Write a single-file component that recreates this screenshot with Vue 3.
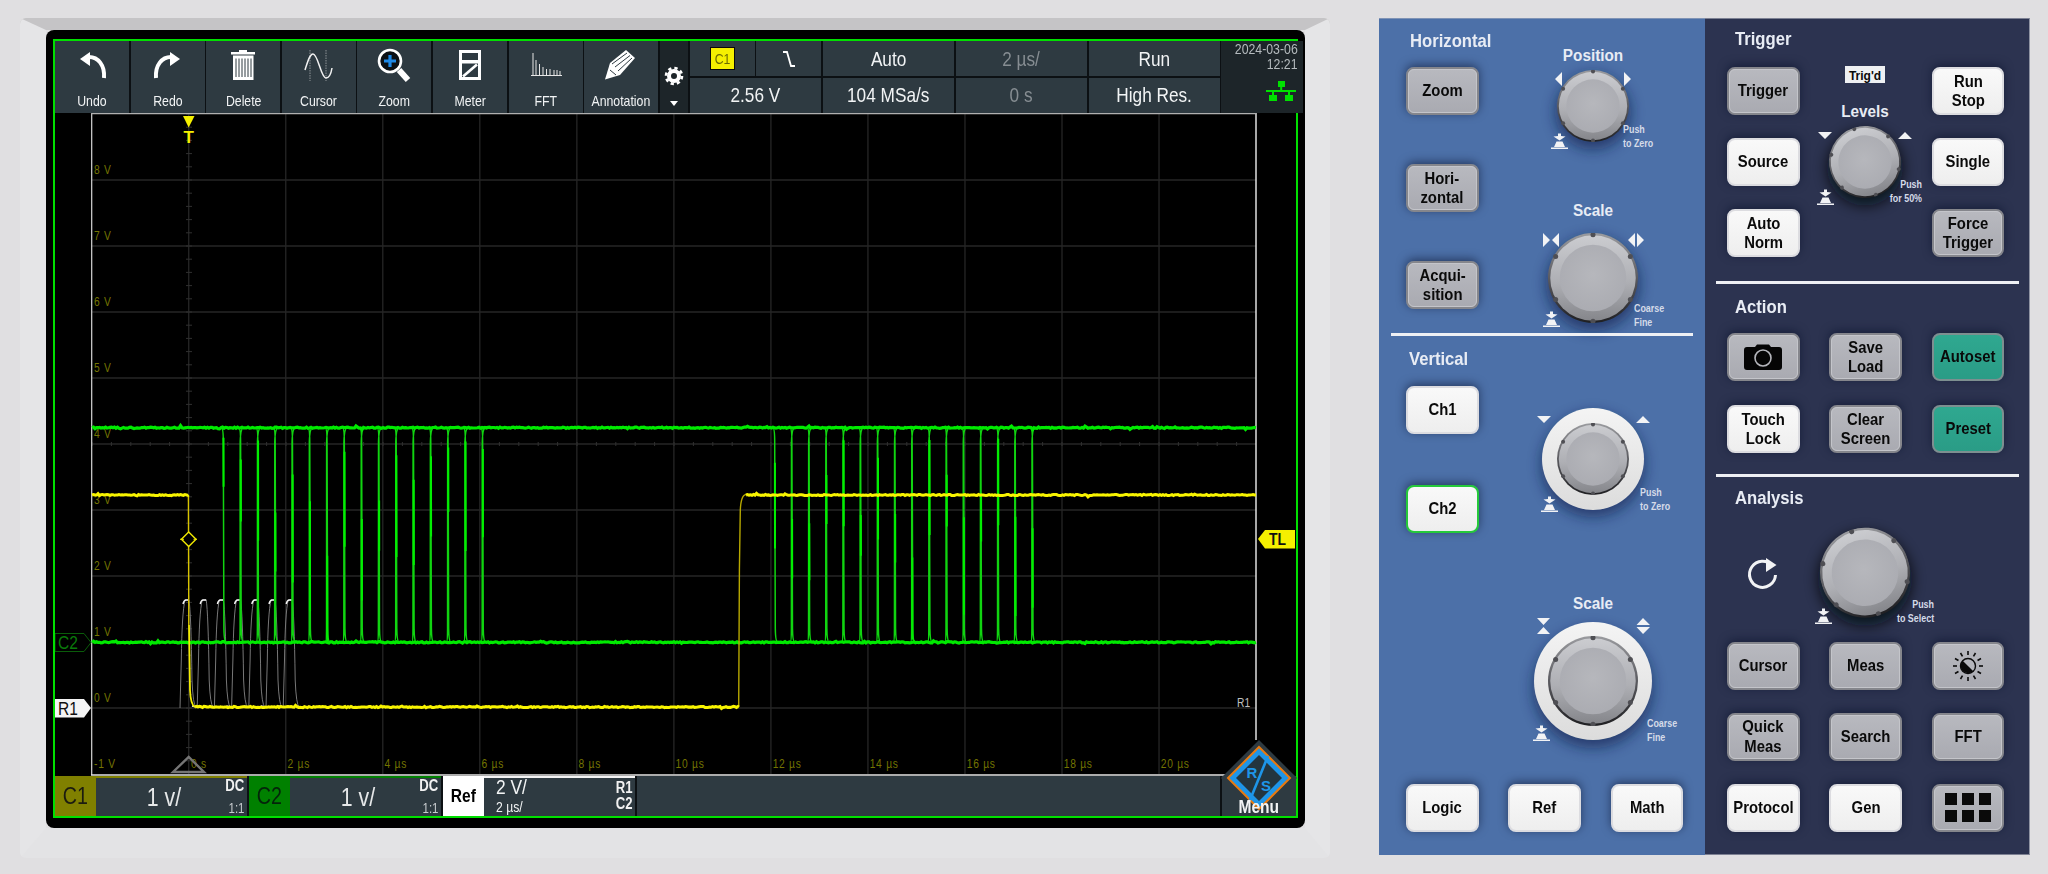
<script setup>
function rng(seed) {
  let s = seed
  return () => {
    s = (s * 16807) % 2147483647
    return s / 2147483647
  }
}
function noisy(x0, x1, y, seed, amp = 1) {
  const r = rng(seed)
  let d = `M${x0},${y}`
  for (let x = x0 + 1.5; x < x1; x += 1.5) {
    let v = y + (r() - 0.5) * amp
    if (r() < 0.05) v += (r() - 0.5) * 3
    d += `L${x.toFixed(1)},${v.toFixed(1)}`
  }
  return d + `L${x1},${y}`
}
const HI = 427.7
const LO = 642.3
const seq = (start, step, n) => Array.from({ length: n }, (_, i) => start + step * i)
const edgeXs = [...seq(223.3, 17.29, 16), ...seq(774.7, 17.18, 16)]
const edges = edgeXs
  .map((x, i) => {
    const fall = `M${x - 2},${HI} Q${x},${HI} ${x},${HI + 14} L${x + 0.6},${LO - 14} Q${x + 0.8},${LO} ${x + 3},${LO}`
    const rise = i === 0 || i === 16 ? '' : `M${x - 1.5},${LO} Q${x - 0.6},${LO} ${x - 0.5},${LO - 14} L${x - 0.4},${HI + 14} Q${x},${HI} ${x + 3},${HI}`
    return fall + rise
  })
  .join(' ')
const r2 = rng(77)
const edgeBright = edgeXs
  .map((x) => {
    const a = HI + 10 + r2() * 120
    const b = a + 40 + r2() * 70
    return `M${x + 0.2},${a.toFixed(1)}L${x + 0.3},${b.toFixed(1)}`
  })
  .join(' ')
const c2Hi = noisy(92, 1256, HI, 11, 1.2)
const c2Lo = noisy(92, 1256, LO, 23, 1.2)
const c1A = noisy(92, 188.5, 495, 31, 1.1)
const c1B = noisy(195, 739, 707, 47, 1.2)
const c1C = noisy(746, 1256, 495, 59, 1.1)
const refXs = seq(180, 17.2, 7)
const refSides = refXs
  .map((x) => `M${x},708 L${x + 1.3},660 Q${x + 2},612 ${x + 5},600 L${x + 9},600 Q${x + 11},612 ${x + 12},680 Q${x + 13},705 ${x + 16},707`)
  .join(' ')
const refTops = refXs.map((x) => `M${x + 3},604 Q${x + 4},600 ${x + 6},600 L${x + 9},600`).join(' ')
const refLows = refXs.map((x) => `M${x + 12},706 L${x + 17},707`).join(' ')
const gridX = seq(91.7, 97.03, 13).slice(1, 12)
const gridY = [180, 246, 312, 378, 444, 510, 576, 642, 708]
const vLabels = gridY.map((y, i) => ({ y: y - 10, t: `${8 - i} V` }))
const tLabels = seq(2, 2, 10).map((t, i) => ({ x: 287.5 + i * 97.03, t: `${t} µs` }))
const vTicks = seq(114, 13.2, 50)
const hTicks = seq(92, 19.4, 60)
const rays = seq(0, 30, 12)
</script>

<template>
  <div class="page">
    <svg class="defs" width="0" height="0" aria-hidden="true">
      <defs>
        <linearGradient id="rim" x1="0" y1="0" x2="0" y2="1">
          <stop offset="0" stop-color="#9a9b9f" />
          <stop offset="0.55" stop-color="#55555a" />
          <stop offset="1" stop-color="#1f1f22" />
        </linearGradient>
        <linearGradient id="body" x1="0" y1="0" x2="0" y2="1">
          <stop offset="0" stop-color="#cbccd0" />
          <stop offset="0.55" stop-color="#aeafb4" />
          <stop offset="1" stop-color="#85868b" />
        </linearGradient>
        <radialGradient id="cap" cx="0.5" cy="0.45" r="0.6">
          <stop offset="0" stop-color="#b6b7bc" />
          <stop offset="1" stop-color="#aaabb1" />
        </radialGradient>
        <linearGradient id="ring" x1="0" y1="0" x2="0" y2="1">
          <stop offset="0" stop-color="#f4f4f4" />
          <stop offset="1" stop-color="#dcdcdc" />
        </linearGradient>
        <filter id="blur" x="-50%" y="-50%" width="200%" height="200%">
          <feGaussianBlur stdDeviation="7" />
        </filter>
        <symbol id="knob" viewBox="-50 -50 100 100">
          <circle r="50" fill="url(#rim)" />
          <circle r="47.5" fill="url(#body)" />
          <circle r="37" fill="url(#cap)" />
          <g fill="#4f4f54">
            <circle cx="0" cy="-48" r="2.8" />
            <circle cx="41.5" cy="-24" r="2.8" />
            <circle cx="41.5" cy="24" r="2.8" />
            <circle cx="0" cy="48" r="2.8" />
            <circle cx="-41.5" cy="24" r="2.8" />
            <circle cx="-41.5" cy="-24" r="2.8" />
          </g>
        </symbol>
        <symbol id="push" viewBox="0 0 17 16">
          <path d="M2.5 3.5 L7 3 L7 0.5 L10 0.5 L10 3 L14.5 3.5 L8.5 7.5Z M5.5 8.5 H11.5 L14 14 H3Z M0 14.6 H17 V16 H0Z" fill="#f2f3f5" />
        </symbol>
      </defs>
    </svg>

    <div class="bezel">
      <div class="frame">
        <div class="display">
          <div class="toolbar">
            <div class="tools">
              <div class="tool">
                <svg class="icon" viewBox="0 0 36 36"><path d="M6 13 L16 6 V20Z" fill="#fff" /><path d="M15 11 C24 11 31 19 30 32" fill="none" stroke="#fff" stroke-width="4" /></svg>
                <span class="nr">Undo</span>
              </div>
              <div class="tool">
                <svg class="icon" viewBox="0 0 36 36"><path d="M30 13 L20 6 V20Z" fill="#fff" /><path d="M21 11 C12 11 5 19 6 32" fill="none" stroke="#fff" stroke-width="4" /></svg>
                <span class="nr">Redo</span>
              </div>
              <div class="tool">
                <svg class="icon" viewBox="0 0 36 36">
                  <path d="M6 6 H14 V4 H22 V6 H30 V8.5 H6Z M8 9.5 H28.5 V34 H8Z" fill="#fff" />
                  <path d="M11 12.5 V31 M14 12.5 V31 M17 12.5 V31 M20 12.5 V31 M23 12.5 V31 M26 12.5 V31" stroke="#2e3a41" stroke-width="1" />
                </svg>
                <span class="nr">Delete</span>
              </div>
              <div class="tool">
                <svg class="icon" viewBox="0 0 36 36">
                  <path d="M9 4 V35 M25 4 V35" stroke="#8c9296" stroke-width="1" stroke-dasharray="1.5 1" />
                  <path d="M4 24 C7 14 9 8 12 8 C17 8 20 32 25 32 C28 32 30 28 31 22" fill="none" stroke="#f2f2f2" stroke-width="1.5" />
                </svg>
                <span class="nr">Cursor</span>
              </div>
              <div class="tool">
                <svg class="icon" viewBox="0 0 36 36">
                  <circle cx="14" cy="15" r="11" fill="#0b1014" stroke="#fff" stroke-width="2.6" />
                  <path d="M14 9 V21 M8 15 H20" stroke="#1e88e5" stroke-width="3.2" />
                  <path d="M23 24 L32 34" stroke="#fff" stroke-width="6" />
                </svg>
                <span class="nr">Zoom</span>
              </div>
              <div class="tool">
                <svg class="icon" viewBox="0 0 36 36">
                  <rect x="7" y="4" width="22" height="30" fill="#fff" />
                  <rect x="10" y="7" width="16" height="7" fill="#2e3a41" />
                  <rect x="10" y="17.5" width="16" height="13.5" fill="#2e3a41" />
                  <path d="M11 30.5 L25 18.5" stroke="#fff" stroke-width="2.6" />
                </svg>
                <span class="nr">Meter</span>
              </div>
              <div class="tool">
                <svg class="icon" viewBox="0 0 36 36">
                  <path d="M3 29.5 H34" stroke="#e6e6e6" stroke-width="1" />
                  <path d="M5 29 V7 M8 29 V14 M11.5 29 V18 M15 29 V21 M18.5 29 V23 M22 29 V23 M26 29 V24 M29 29 V24 M32 29 V25" stroke="#e6e6e6" stroke-width="1" />
                </svg>
                <span class="nr">FFT</span>
              </div>
              <div class="tool">
                <svg class="icon" viewBox="0 0 36 36">
                  <path d="M2 33.5 L7 17 L23 4 L32 12 L17 29Z" fill="#fff" />
                  <path d="M7 24 L13 29 M9 18 L24 7 M12 21 L27 9.5 M15 25 L29 12" stroke="#2e3a41" stroke-width="1" />
                </svg>
                <span class="nr">Annotation</span>
              </div>
            </div>
            <div class="gear-col">
              <svg class="gear" viewBox="0 0 20 20">
                <circle cx="10" cy="10" r="5" fill="none" stroke="#fff" stroke-width="4" />
                <circle cx="10" cy="10" r="8" fill="none" stroke="#fff" stroke-width="2.6" stroke-dasharray="3.3 3" />
              </svg>
              <svg class="caret" viewBox="0 0 8 5"><path d="M0 0 H8 L4 5Z" fill="#fff" /></svg>
            </div>
            <div class="status">
              <div class="st chip-cell"><span class="chip"><span class="nr">C1</span></span></div>
              <div class="st">
                <svg class="slope" viewBox="0 0 14 16"><path d="M1 1 H5 L9 15 H13" fill="none" stroke="#fff" stroke-width="1.8" /></svg>
              </div>
              <div class="st"><span class="nr">Auto</span></div>
              <div class="st dim"><span class="nr">2 µs/</span></div>
              <div class="st"><span class="nr">Run</span></div>
              <div class="st span2"><span class="nr">2.56 V</span></div>
              <div class="st"><span class="nr">104 MSa/s</span></div>
              <div class="st dim"><span class="nr">0 s</span></div>
              <div class="st"><span class="nr">High Res.</span></div>
            </div>
            <div class="clock">
              <span class="nr">2024-03-06</span>
              <span class="nr">12:21</span>
              <svg class="net" viewBox="0 0 30 20">
                <path d="M12 0 H19 V6 H16.2 V9 H30 V11 H24 V14 H27 V20 H19 V14 H22 V11 H8 V14 H11 V20 H3 V14 H6 V11 H0 V9 H14.2 V6 H12Z" fill="#00e000" />
              </svg>
            </div>
          </div>

          <svg class="plot" viewBox="55 113 1241 663" width="1241" height="663">
            <rect x="55" y="113" width="1241" height="663" fill="#000" />
            <g stroke="#262626" stroke-width="1.3">
              <path v-for="x in gridX" :key="x" :d="`M${x},114 V774`" />
              <path v-for="y in gridY" :key="y" :d="`M92,${y} H1256`" />
            </g>
            <g stroke="#303030" stroke-width="1">
              <path v-for="y in vTicks" :key="y" :d="`M186,${y} H192`" />
              <path v-for="x in hTicks" :key="x" :d="`M${x},442 V446`" />
            </g>
            <path d="M91.7,113 V775" stroke="#d8d8d8" stroke-width="1.2" />
            <path d="M1256,113 V740" stroke="#f0f0f0" stroke-width="1.4" />
            <path d="M91,113.5 H1256" stroke="#b0b0b0" stroke-width="1.4" />
            <path d="M91,775 H1225" stroke="#e6e6e6" stroke-width="1.4" />

            <g class="axis">
              <text v-for="l in vLabels" :key="l.t" x="94" :y="l.y + 4">{{ l.t }}</text>
              <text x="94" y="768">-1 V</text>
              <text x="191" y="768">0 s</text>
              <text v-for="l in tLabels" :key="l.t" :x="l.x" y="768">{{ l.t }}</text>
            </g>
            <path d="M173,772 L188.7,757 L204,772Z" fill="none" stroke="#757575" stroke-width="2.4" />
            <text class="r1small" x="1237" y="707">R1</text>

            <path :d="refSides" fill="none" stroke="#787878" stroke-width="1" />
            <path :d="refTops" fill="none" stroke="#f4f4f4" stroke-width="1.5" />
            <path :d="refLows" fill="none" stroke="#f0f0f0" stroke-width="1.5" />

            <path :d="edges" fill="none" stroke="#10d410" stroke-width="1.5" />
            <path :d="edgeBright" fill="none" stroke="#00f000" stroke-width="2" />
            <path :d="c2Hi" fill="none" stroke="#00ea00" stroke-width="3.2" />
            <path :d="c2Lo" fill="none" stroke="#00ea00" stroke-width="3.2" />

            <path d="M188.4,495 L188.8,625" fill="none" stroke="#d8c400" stroke-width="1.4" />
            <path d="M189,625 L190,690 Q190.6,705 195,707" fill="none" stroke="#f5ee00" stroke-width="1.8" />
            <path d="M738.7,707 L739.4,570 L740.3,510 Q741,495 746,494.5" fill="none" stroke="#b7a800" stroke-width="1.4" />
            <path :d="c1A" fill="none" stroke="#f8f400" stroke-width="3" />
            <path :d="c1B" fill="none" stroke="#f8f400" stroke-width="3" />
            <path :d="c1C" fill="none" stroke="#f8f400" stroke-width="3" />

            <path d="M188.7,532 L196,539.3 L188.7,546.6 L181.4,539.3Z" fill="#000" stroke="#f0e800" stroke-width="1.4" />
            <path d="M180,539.3 H184 M193.5,539.3 H197" stroke="#f0e800" stroke-width="1" />

            <path d="M183,116 H194.5 L188.7,127.5Z" fill="#f5f000" />
            <text class="tmark" x="188.7" y="142.5">T</text>

            <path d="M55,633.5 H84 L91,642.5 L84,651.5 H55Z" fill="#000" stroke="#0a5c0a" stroke-width="1" />
            <text class="mark green" x="58" y="649">C2</text>
            <path d="M55,699 H84 L91,708 L84,717.5 H55Z" fill="#f4f4f4" />
            <text class="mark" x="58" y="715">R1</text>
            <path d="M1258,539 L1265,530 H1295 V548.5 H1265Z" fill="#f5f000" />
            <text class="mark tl" x="1269" y="545.5">TL</text>
          </svg>

          <div class="bottom">
            <div class="chan olive">
              <div class="tag"><span class="nr">C1</span></div>
              <div class="val"><span class="nr">1 v/</span></div>
              <div class="meta"><b class="nr rt">DC</b><span class="nr rt">1:1</span></div>
            </div>
            <div class="chan green">
              <div class="tag"><span class="nr">C2</span></div>
              <div class="val"><span class="nr">1 v/</span></div>
              <div class="meta"><b class="nr rt">DC</b><span class="nr rt">1:1</span></div>
            </div>
            <div class="chan ref">
              <div class="tag"><span class="nr">Ref</span></div>
              <div class="refval"><span class="rv">2 V/</span><small class="rv">2 µs/</small></div>
              <div class="meta refmeta"><b class="nr rt">R1</b><b class="nr rt">C2</b></div>
            </div>
            <div class="spacer"></div>
            <div class="menu">
              <svg class="logo" viewBox="-38 -38 76 76">
                <path d="M0 -38 L38 0 L0 38 L-38 0Z" fill="#2e3a41" />
                <path d="M0 -31 L31 0 L0 31 L-31 0Z" fill="#1e95e8" stroke="#e87a10" stroke-width="2" />
                <path d="M0 -23 L23 0 L0 23 L-23 0Z" fill="#23353f" />
                <path d="M9 -22 L-9 22" stroke="#1e95e8" stroke-width="2.6" />
                <text class="rs" x="-7" y="0">R</text>
                <text class="rs" x="7" y="13">S</text>
              </svg>
              <span class="nr">Menu</span>
            </div>
          </div>
        </div>
      </div>
    </div>

    <div class="panels">
      <div class="blue">
        <section class="hz">
          <div class="col">
            <h3>Horizontal</h3>
            <button class="btn gray"><span class="tx">Zoom</span></button>
            <button class="btn gray"><span class="tx">Hori-<br />zontal</span></button>
            <button class="btn gray"><span class="tx">Acqui-<br />sition</span></button>
          </div>
          <svg class="ctl" viewBox="1478 18 227 315" width="227" height="315">
            <text class="lab" x="1592" y="60">Position</text>
            <circle class="sh" cx="1592" cy="111" r="38" filter="url(#blur)" />
            <use href="#knob" x="1556" y="69" width="72" height="72" />
            <path d="M1561 71 V85 L1554 78Z M1623 71 V85 L1630 78Z" fill="#f2f3f5" />
            <use href="#push" x="1550" y="132" width="17" height="16" />
            <text class="hint" x="1622" y="132.5">Push</text>
            <text class="hint" x="1622" y="146.5">to Zero</text>

            <text class="lab" x="1592" y="215.5">Scale</text>
            <circle class="sh" cx="1592" cy="283" r="47" filter="url(#blur)" />
            <use href="#knob" x="1547" y="232" width="90" height="90" />
            <path d="M1542 232 L1549 239 L1542 246Z M1558 232 L1551 239 L1558 246Z M1634 232 L1627 239 L1634 246Z M1636 232 L1643 239 L1636 246Z" fill="#f2f3f5" />
            <use href="#push" x="1542" y="310" width="17" height="16" />
            <text class="hint" x="1633" y="311.5">Coarse</text>
            <text class="hint" x="1633" y="325.5">Fine</text>
          </svg>
        </section>
        <hr class="rule blue-rule" />
        <section class="vt">
          <div class="col">
            <h3>Vertical</h3>
            <button class="btn"><span class="tx">Ch1</span></button>
            <button class="btn ch2"><span class="tx">Ch2</span></button>
          </div>
          <svg class="ctl" viewBox="1478 336 227 434" width="227" height="434">
            <circle class="sh" cx="1592" cy="465" r="52" filter="url(#blur)" />
            <circle cx="1592" cy="459" r="51" fill="url(#ring)" />
            <use href="#knob" x="1556" y="423" width="72" height="72" />
            <path d="M1536 416 H1550 L1543 423Z M1635 423 H1649 L1642 416Z" fill="#f2f3f5" />
            <use href="#push" x="1540" y="496" width="17" height="16" />
            <text class="hint" x="1639" y="496.5">Push</text>
            <text class="hint" x="1639" y="510.5">to Zero</text>

            <text class="lab" x="1592" y="609.5">Scale</text>
            <circle class="sh" cx="1592" cy="688" r="60" filter="url(#blur)" />
            <circle cx="1592" cy="681" r="59" fill="url(#ring)" />
            <use href="#knob" x="1547" y="636" width="90" height="90" />
            <path d="M1536 618 H1549 L1542.5 625Z M1536 634 H1549 L1542.5 627Z M1635.5 625 H1649 L1642 618Z M1635.5 627 H1649 L1642 634Z" fill="#f2f3f5" />
            <use href="#push" x="1532" y="725" width="17" height="16" />
            <text class="hint" x="1646" y="727">Coarse</text>
            <text class="hint" x="1646" y="741">Fine</text>
          </svg>
        </section>
        <div class="mathrow">
          <button class="btn"><span class="tx">Logic</span></button>
          <button class="btn"><span class="tx">Ref</span></button>
          <button class="btn"><span class="tx">Math</span></button>
        </div>
      </div>

      <div class="navy">
        <h3 class="first">Trigger</h3>
        <div class="keys trigger">
          <button class="btn gray"><span class="tx">Trigger</span></button>
          <svg class="ctl mid" viewBox="1829 67 72 190" width="72" height="190">
            <rect x="1845" y="66" width="40" height="17" fill="#eef0f2" />
            <text class="trigd" x="1865" y="79.5">Trig'd</text>
            <text class="lab" x="1865" y="117">Levels</text>
            <circle class="sh dark" cx="1865" cy="168" r="38" filter="url(#blur)" />
            <use href="#knob" x="1829" y="126" width="72" height="72" transform="rotate(-18 1865 162)" />
            <path d="M1818 132 H1832 L1825 139Z M1898 139 H1912 L1905 132Z" fill="#f2f3f5" />
            <use href="#push" x="1817" y="189" width="17" height="16" />
            <text class="hint end" x="1922" y="188.5">Push</text>
            <text class="hint end" x="1922" y="202.5">for 50%</text>
          </svg>
          <button class="btn"><span class="tx">Run<br />Stop</span></button>
          <button class="btn"><span class="tx">Source</span></button>
          <button class="btn"><span class="tx">Single</span></button>
          <button class="btn"><span class="tx">Auto<br />Norm</span></button>
          <button class="btn gray force"><span class="tx">Force<br />Trigger</span></button>
        </div>
        <hr class="rule r1" />
        <h3 class="after">Action</h3>
        <div class="keys action">
          <button class="btn gray">
            <svg class="cam" viewBox="0 0 38 26">
              <path d="M3 3 H11 L13 0.5 H25 L27 3 H35 Q38 3 38 6 V23 Q38 26 35 26 H3 Q0 26 0 23 V6 Q0 3 3 3Z" fill="#050505" />
              <circle cx="19" cy="14" r="8" fill="none" stroke="#b5b6bc" stroke-width="1.6" />
            </svg>
          </button>
          <button class="btn gray"><span class="tx">Save<br />Load</span></button>
          <button class="btn teal"><span class="tx">Autoset</span></button>
          <button class="btn"><span class="tx">Touch<br />Lock</span></button>
          <button class="btn gray"><span class="tx">Clear<br />Screen</span></button>
          <button class="btn teal"><span class="tx">Preset</span></button>
        </div>
        <hr class="rule r2" />
        <h3 class="after an">Analysis</h3>
        <svg class="ctl analysis" viewBox="1705 508 325 129" width="325" height="129">
          <path d="M1772.5 566 A13 13 0 1 0 1775.5 575" fill="none" stroke="#f2f3f5" stroke-width="3" />
          <path d="M1766 558 L1776.5 565 L1766 572Z" fill="#f2f3f5" />
          <circle class="sh dark" cx="1865" cy="579" r="47" filter="url(#blur)" />
          <use href="#knob" x="1820" y="527.7" width="90" height="90" transform="rotate(-18 1865 572.7)" />
          <use href="#push" x="1815" y="608" width="17" height="16" />
          <text class="hint end" x="1934" y="608.5">Push</text>
          <text class="hint end" x="1934" y="622.5">to Select</text>
        </svg>
        <div class="keys analysis-keys">
          <button class="btn gray"><span class="tx">Cursor</span></button>
          <button class="btn gray"><span class="tx">Meas</span></button>
          <button class="btn gray">
            <svg class="sun" viewBox="-16 -16 32 32">
              <path v-for="a in rays" :key="a" d="M0 -11 V-15" stroke="#0a0a0a" stroke-width="1.6" :transform="`rotate(${a})`" />
              <circle r="7.5" fill="#b5b6bc" stroke="#0a0a0a" stroke-width="1.4" />
              <path d="M5.3 -5.3 A7.5 7.5 0 0 1 -5.3 5.3 Z" fill="#0a0a0a" transform="rotate(90)" />
            </svg>
          </button>
          <button class="btn gray"><span class="tx">Quick<br />Meas</span></button>
          <button class="btn gray"><span class="tx">Search</span></button>
          <button class="btn gray"><span class="tx">FFT</span></button>
          <button class="btn"><span class="tx">Protocol</span></button>
          <button class="btn"><span class="tx">Gen</span></button>
          <button class="btn gray">
            <svg class="tiles" viewBox="0 0 46 30">
              <path d="M0 0h12v12H0z M17 0h12v12H17z M34 0h12v12H34z M0 17h12v12H0z M17 17h12v12H17z M34 17h12v12H34z" fill="#0a0a0a" />
            </svg>
          </button>
        </div>
      </div>
    </div>
  </div>
</template>

<style>
html, body { margin: 0; background: #e0dfe1; }
</style>

<style scoped>
.page {
  width: 2048px;
  height: 874px;
  box-sizing: border-box;
  padding: 18px 0 0 20px;
  display: flex;
  align-items: flex-start;
  background: #e0dfe1;
  overflow: hidden;
  font-family: "Liberation Sans", Arial, sans-serif;
}
.defs { position: absolute; }
.nr {
  display: inline-block;
  white-space: nowrap;
  transform: scaleX(0.82);
}
.nr.rt { transform-origin: 100% 50%; }
.tx {
  display: inline-block;
  white-space: nowrap;
  transform: scaleX(0.9);
}

/* ---- scope ---- */
.bezel {
  width: 1310px;
  height: 840px;
  flex: none;
  box-sizing: border-box;
  border-style: solid;
  border-width: 12px 25px 30px 26px;
  border-color: #c5c4c6 #e5e5e7 #e3e3e5 #e5e5e7;
  border-radius: 6px;
}
.frame {
  height: 798px;
  width: 1259px;
  box-sizing: border-box;
  padding: 9px 7px 10px 7px;
  background: #000;
  border-radius: 8px;
}
.display {
  height: 779px;
  box-sizing: border-box;
  border: 2px solid #00e000;
  background: #000;
  display: flex;
  flex-direction: column;
  color: #f2f4f5;
}
.toolbar {
  height: 72px;
  flex: none;
  display: flex;
  background: #0c1013;
}
.tools { display: flex; gap: 1.6px; width: 604px; flex: none; }
.tool {
  width: 74px;
  flex: none;
  background: #2e3a41;
  display: flex;
  flex-direction: column;
  align-items: center;
  font-size: 15px;
  line-height: 18px;
}
.icon { width: 36px; height: 36px; margin-top: 5px; margin-bottom: 10px; }
.gear-col {
  width: 28px;
  margin: 0 2px 0 1px;
  flex: none;
  background: #1d2529;
  display: flex;
  flex-direction: column;
  align-items: center;
}
.gear { width: 20px; height: 20px; margin-top: 25px; }
.caret { width: 8px; height: 5px; margin-top: 15px; }
.status {
  width: 530px;
  flex: none;
  display: grid;
  grid-template-columns: 64.5px 65px 131.5px 131.5px 131.5px;
  grid-template-rows: 35px 35.5px;
  gap: 1.5px;
}
.st {
  background: #2e3a41;
  display: flex;
  align-items: center;
  justify-content: center;
  font-size: 21px;
}
.st.dim { color: #868d92; }
.span2 { grid-column: span 2; }
.chip {
  width: 25px;
  height: 23px;
  background: #f5f000;
  color: #6a6a00;
  font-size: 15px;
  border: 1px solid #0a0a0a;
  box-sizing: border-box;
  display: flex;
  align-items: center;
  justify-content: center;
}
.slope { width: 14px; height: 16px; }
.clock {
  flex: 1;
  margin-left: 1px;
  background: #1d2529;
  display: flex;
  flex-direction: column;
  align-items: flex-end;
  padding: 1px 5px 0 0;
  font-size: 15px;
  line-height: 14.5px;
  color: #b4babd;
}
.clock .nr { transform-origin: 100% 50%; }
.net { width: 30px; height: 20px; margin-top: 10px; margin-right: 2px; }
.plot { display: block; flex: none; }

.axis text {
  font-size: 12.5px;
  fill: #747400;
  letter-spacing: 0.9px;
  transform: scaleX(0.82);
  transform-box: fill-box;
  transform-origin: 0 50%;
}
.r1small, .mark {
  transform: scaleX(0.82);
  transform-box: fill-box;
  transform-origin: 0 50%;
}
.r1small { font-size: 12.5px; fill: #c0c0c0; }
.tmark { font-size: 17px; font-weight: 700; fill: #f5f000; text-anchor: middle; }
.mark { font-size: 19px; fill: #111; }
.mark.green { fill: #0a7a0a; }
.mark.tl { font-weight: 700; font-size: 17px; }

.bottom { flex: 1; display: flex; gap: 2px; background: #0c1013; }
.chan {
  width: 192px;
  flex: none;
  display: flex;
  background: #2e3a41;
  box-sizing: border-box;
  border-top: 2px solid #808000;
}
.chan.green { border-top-color: #008000; }
.chan.ref { border-top-color: #f4f4f4; }
.tag {
  width: 41px;
  flex: none;
  margin-top: -2px;
  background: #808000;
  color: #1c1c10;
  font-size: 24px;
  display: flex;
  align-items: center;
  justify-content: center;
}
.green .tag { background: #008000; color: #04240a; }
.ref .tag { background: #fff; color: #000; font-size: 19px; font-weight: 700; }
.val { flex: 1; display: flex; align-items: center; justify-content: center; font-size: 26px; padding-left: 6px; color: #e6e8e9; }
.meta {
  width: 18px;
  padding-right: 3px;
  display: flex;
  flex-direction: column;
  justify-content: space-between;
  align-items: flex-end;
  font-size: 14px;
  line-height: 15px;
  color: #c8cccf;
}
.meta b { font-size: 16px; color: #f2f2f2; font-weight: 700; }
.refmeta { justify-content: flex-start; gap: 1px; padding-top: 2px; }
.refval {
  flex: 1;
  display: flex;
  flex-direction: column;
  align-items: flex-start;
  gap: 2px;
  margin-top: -1px;
  padding-left: 12px;
  font-size: 20px;
  line-height: 21px;
}
.rv {
  display: inline-block;
  white-space: nowrap;
  transform: scaleX(0.87);
  transform-origin: 0 50%;
}
.refval small { font-size: 14px; line-height: 15px; }
.spacer { flex: 1; background: #2e3a41; }
.menu {
  width: 74px;
  flex: none;
  position: relative;
  background: #2e3a41;
  display: flex;
  align-items: flex-end;
  justify-content: center;
  font-size: 19px;
  line-height: 19px;
  font-weight: 700;
}
.logo { position: absolute; left: 0; top: -36px; width: 76px; height: 76px; margin-left: -1px; }
.rs { font-size: 15px; font-weight: 700; fill: #1e95e8; text-anchor: middle; }

/* ---- panels ---- */
.panels { display: flex; margin-left: 49px; height: 837px; flex: none; }
.blue {
  width: 326px;
  flex: none;
  background: #4c70a8;
  box-sizing: border-box;
  border-top: 1px solid #7f93b5;
  display: flex;
  flex-direction: column;
}
.navy {
  width: 325px;
  flex: none;
  background: #2c3350;
  box-sizing: border-box;
  border-top: 1px solid #7d8193;
  border-bottom: 1px solid #7d8193;
  border-right: 1px solid #8e93a2;
  padding: 10px 0 0 21.7px;
  position: relative;
}
h3 {
  margin: 0;
  height: 20px;
  line-height: 20px;
  font-size: 18.5px;
  font-weight: 700;
  color: #e8ecf4;
  transform: scaleX(0.9);
  transform-origin: 0 50%;
  white-space: nowrap;
}
h3.first { margin-left: 8px; }
.hz, .vt { display: flex; align-items: flex-start; padding-left: 27px; }
.hz { height: 314px; }
.vt { height: 434px; }
.col { width: 72.6px; flex: none; display: flex; flex-direction: column; gap: 49px; padding-top: 12px; }
.col h3 { margin-left: 4px; margin-bottom: -33px; }
.vt .col { padding-top: 12.5px; gap: 51px; }
.vt .col h3 { margin-left: 3px; margin-bottom: -34px; }
.ctl { display: block; flex: none; overflow: visible; }
.lab {
  font-size: 17px;
  font-weight: 700;
  fill: #e8ecf4;
  text-anchor: middle;
  transform: scaleX(0.9);
  transform-box: fill-box;
  transform-origin: 50% 50%;
}
.hint {
  font-size: 10.5px;
  font-weight: 700;
  fill: #d5dbe8;
  transform: scaleX(0.85);
  transform-box: fill-box;
  transform-origin: 0 50%;
}
.hint.end { text-anchor: end; transform-origin: 100% 50%; }
.sh { fill: #0f1c48; opacity: 0.6; }
.sh.dark { fill: #05070f; opacity: 0.75; }
.trigd { font-size: 12px; font-weight: 700; fill: #0a0a0a; text-anchor: middle; }
.rule {
  margin: 0;
  border: 0;
  height: 3px;
  background: #eef0f4;
  width: 303px;
  margin-left: -10.7px;
}
.blue-rule { width: 302px; margin-left: 12px; flex: none; }
.rule.r1 { margin-top: 23.5px; }
.rule.r2 { margin-top: 20.5px; }

.btn {
  width: 72.6px;
  height: 48px;
  padding: 0;
  box-sizing: border-box;
  border: 2px solid #dcdce0;
  border-radius: 8px;
  background: linear-gradient(#f9f9f9, #eeeeee);
  color: #0a0a0a;
  font-family: "Liberation Sans", Arial, sans-serif;
  font-size: 16.5px;
  font-weight: 700;
  line-height: 19.5px;
  box-shadow: 0 -2px 10px rgba(8, 14, 40, 0.55);
  display: flex;
  align-items: center;
  justify-content: center;
  flex: none;
  text-align: center;
}
.btn.gray {
  background: linear-gradient(#b8b9bf, #a9aab1);
  border-color: #85868c;
  outline: 1px solid #c4c5ca;
  outline-offset: -3px;
}
.btn.teal { background: linear-gradient(#2fa890, #2a9c86); border-color: #7d8f90; }
.btn.ch2 { border-color: #25c93a; }
.mathrow { display: flex; gap: 29.8px; padding: 13.6px 0 0 27px; }

.keys {
  display: grid;
  grid-template-columns: repeat(3, 72.6px);
  column-gap: 29.7px;
  row-gap: 23px;
  padding-left: 0.3px;
}
.trigger { margin-top: 18px; position: relative; }
.mid { grid-column: 2; grid-row: 1 / span 3; z-index: 1; }
.after { margin-top: 13.5px; margin-left: 8px; }
.action { margin-top: 16px; row-gap: 24px; }
.an { margin-top: 11.5px; }
.analysis { margin-left: -21.7px; height: 129px; }
.analysis-keys { margin-top: 4.7px; }
.cam { width: 38px; height: 26px; }
.sun { width: 32px; height: 32px; }
.tiles { width: 46px; height: 30px; }
</style>
